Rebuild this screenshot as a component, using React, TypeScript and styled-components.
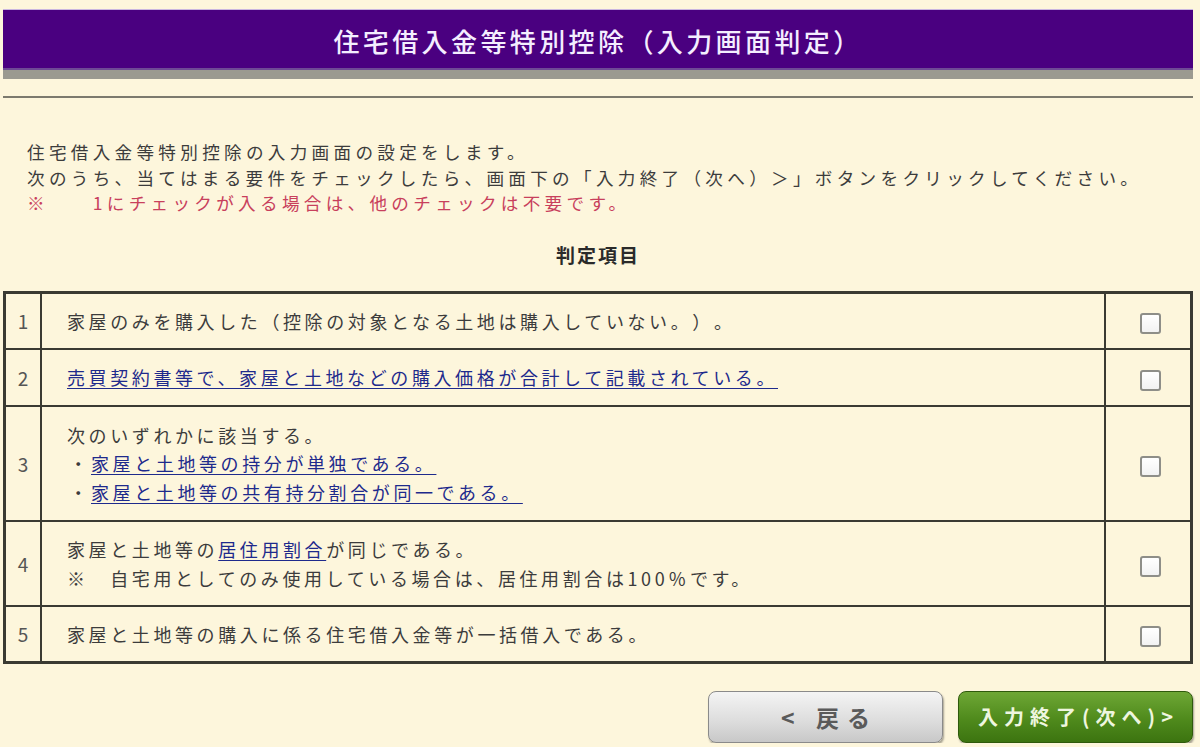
import React from "react";
import styled, { createGlobalStyle } from "styled-components";

const Global = createGlobalStyle`
  html, body { margin: 0; padding: 0; background: #fdf6dc; }
  body {
    font-family: "Noto Sans CJK JP", "Noto Sans", sans-serif;
    color: #3a3a3a;
    text-spacing-trim: space-all;
  }
`;

const Page = styled.div`
  padding: 9px 7px 0 3px;
  min-height: 738px;
  box-sizing: border-box;
`;

const TitleBar = styled.h1`
  margin: 0;
  height: 70px;
  box-sizing: border-box;
  background: #4a0080;
  border-top: 1px solid #c9b6e0;
  border-bottom: 9px solid #9b9a90;
  box-shadow: inset 0 -2px 0 #6e4a95;
  color: #f4eeff;
  font-size: 26px;
  font-weight: 500;
  letter-spacing: 3.4px;
  display: flex;
  align-items: center;
  justify-content: center;
`;

const Rule = styled.hr`
  margin: 17px 0 0;
  border: none;
  height: 2px;
  background: #7c7a6e;
`;

const Intro = styled.div`
  padding: 41px 0 0 24px;
  font-size: 17.6px;
  line-height: 25.5px;
  letter-spacing: 4.3px;
  color: #3c3c3c;
`;

const Line = styled.div<{ $red?: boolean }>`
  color: ${(p) => (p.$red ? "#c8405c" : "inherit")};
  white-space: pre;
`;

const Heading = styled.div`
  margin-top: 26px;
  text-align: center;
  font-size: 19px;
  line-height: 25px;
  font-weight: 700;
  letter-spacing: 2px;
  color: #2a2a2a;
`;

const Table = styled.table`
  margin-top: 24px;
  width: 100%;
  border-collapse: collapse;
  border: 3px solid #3a3a32;
  font-size: 18px;
  letter-spacing: 3.6px;
  color: #3c3c3c;
`;

const Row = styled.tr<{ $h: number }>`
  height: ${(p) => p.$h}px;
`;

const NumCell = styled.td`
  width: 34px;
  border: 2.5px solid #3a3a32;
  text-align: center;
  font-size: 19px;
  color: #555;
  letter-spacing: 0;
  padding: 0;
`;

const TextCell = styled.td`
  border: 2.5px solid #3a3a32;
  padding: 0 0 0 25px;
  line-height: 28.5px;
`;

const CheckCell = styled.td`
  width: 84px;
  border: 2.5px solid #3a3a32;
  text-align: center;
  padding: 0;
`;

const Box = styled.span`
  display: inline-block;
  width: 17px;
  height: 17px;
  border: 2px solid #8e8e88;
  border-radius: 3px;
  background: linear-gradient(#ffffff, #f2f2f2);
  vertical-align: middle;
  position: relative;
  left: 2px;
`;

const Link = styled.a`
  color: #1e2a8c;
  text-decoration: underline;
  text-underline-offset: 3px;
`;

const Bullet = styled.span`
  display: inline-block;
  width: 22px;
  text-align: center;
  padding-left: 2px;
`;

const Buttons = styled.div`
  margin-top: 27px;
  display: flex;
  justify-content: flex-end;
  gap: 15px;
`;

const Button = styled.button<{ $primary?: boolean }>`
  width: 235px;
  height: 52px;
  border-radius: 8px;
  font-family: "Noto Sans CJK JP", sans-serif;
  font-weight: 700;
  cursor: pointer;
  border: 1px solid ${(p) => (p.$primary ? "#2f5a0c" : "#8a8a8a")};
  background: ${(p) =>
    p.$primary
      ? "linear-gradient(#6ea735, #4f8a1c 55%, #3c7410)"
      : "linear-gradient(#f4f4f4, #dcdcdc 60%, #c8c8c8)"};
  color: ${(p) => (p.$primary ? "#eef6df" : "#5a5a5a")};
  box-shadow: 1px 2px 2px rgba(0, 0, 0, 0.35);
  font-size: ${(p) => (p.$primary ? "20px" : "23px")};
  letter-spacing: ${(p) => (p.$primary ? "6px" : "8px")};
  padding: 0 0 0 ${(p) => (p.$primary ? "6px" : "8px")};
`;

const rows = [
  {
    n: 1,
    h: 57,
    content: <>家屋のみを購入した（控除の対象となる土地は購入していない。）。</>,
  },
  {
    n: 2,
    h: 57,
    content: <Link href="#">売買契約書等で、家屋と土地などの購入価格が合計して記載されている。</Link>,
  },
  {
    n: 3,
    h: 115,
    content: (
      <>
        次のいずれかに該当する。
        <br />
        <Bullet>・</Bullet>
        <Link href="#">家屋と土地等の持分が単独である。</Link>
        <br />
        <Bullet>・</Bullet>
        <Link href="#">家屋と土地等の共有持分割合が同一である。</Link>
      </>
    ),
  },
  {
    n: 4,
    h: 85,
    content: (
      <>
        家屋と土地等の<Link href="#">居住用割合</Link>が同じである。
        <br />
        ※　自宅用としてのみ使用している場合は、居住用割合は100％です。
      </>
    ),
  },
  {
    n: 5,
    h: 56,
    content: <>家屋と土地等の購入に係る住宅借入金等が一括借入である。</>,
  },
];

export default function App() {
  return (
    <>
      <Global />
      <Page>
        <TitleBar>住宅借入金等特別控除（入力画面判定）</TitleBar>
        <Rule />
        <Intro>
          <Line>住宅借入金等特別控除の入力画面の設定をします。</Line>
          <Line>次のうち、当てはまる要件をチェックしたら、画面下の「入力終了（次へ）＞」ボタンをクリックしてください。</Line>
          <Line $red>※　　1にチェックが入る場合は、他のチェックは不要です。</Line>
        </Intro>
        <Heading>判定項目</Heading>
        <Table>
          <tbody>
            {rows.map((r) => (
              <Row key={r.n} $h={r.h}>
                <NumCell>{r.n}</NumCell>
                <TextCell>{r.content}</TextCell>
                <CheckCell>
                  <Box role="checkbox" aria-checked="false" />
                </CheckCell>
              </Row>
            ))}
          </tbody>
        </Table>
        <Buttons>
          <Button>&lt;&nbsp;戻る</Button>
          <Button $primary>入力終了(次へ)&gt;</Button>
        </Buttons>
      </Page>
    </>
  );
}
